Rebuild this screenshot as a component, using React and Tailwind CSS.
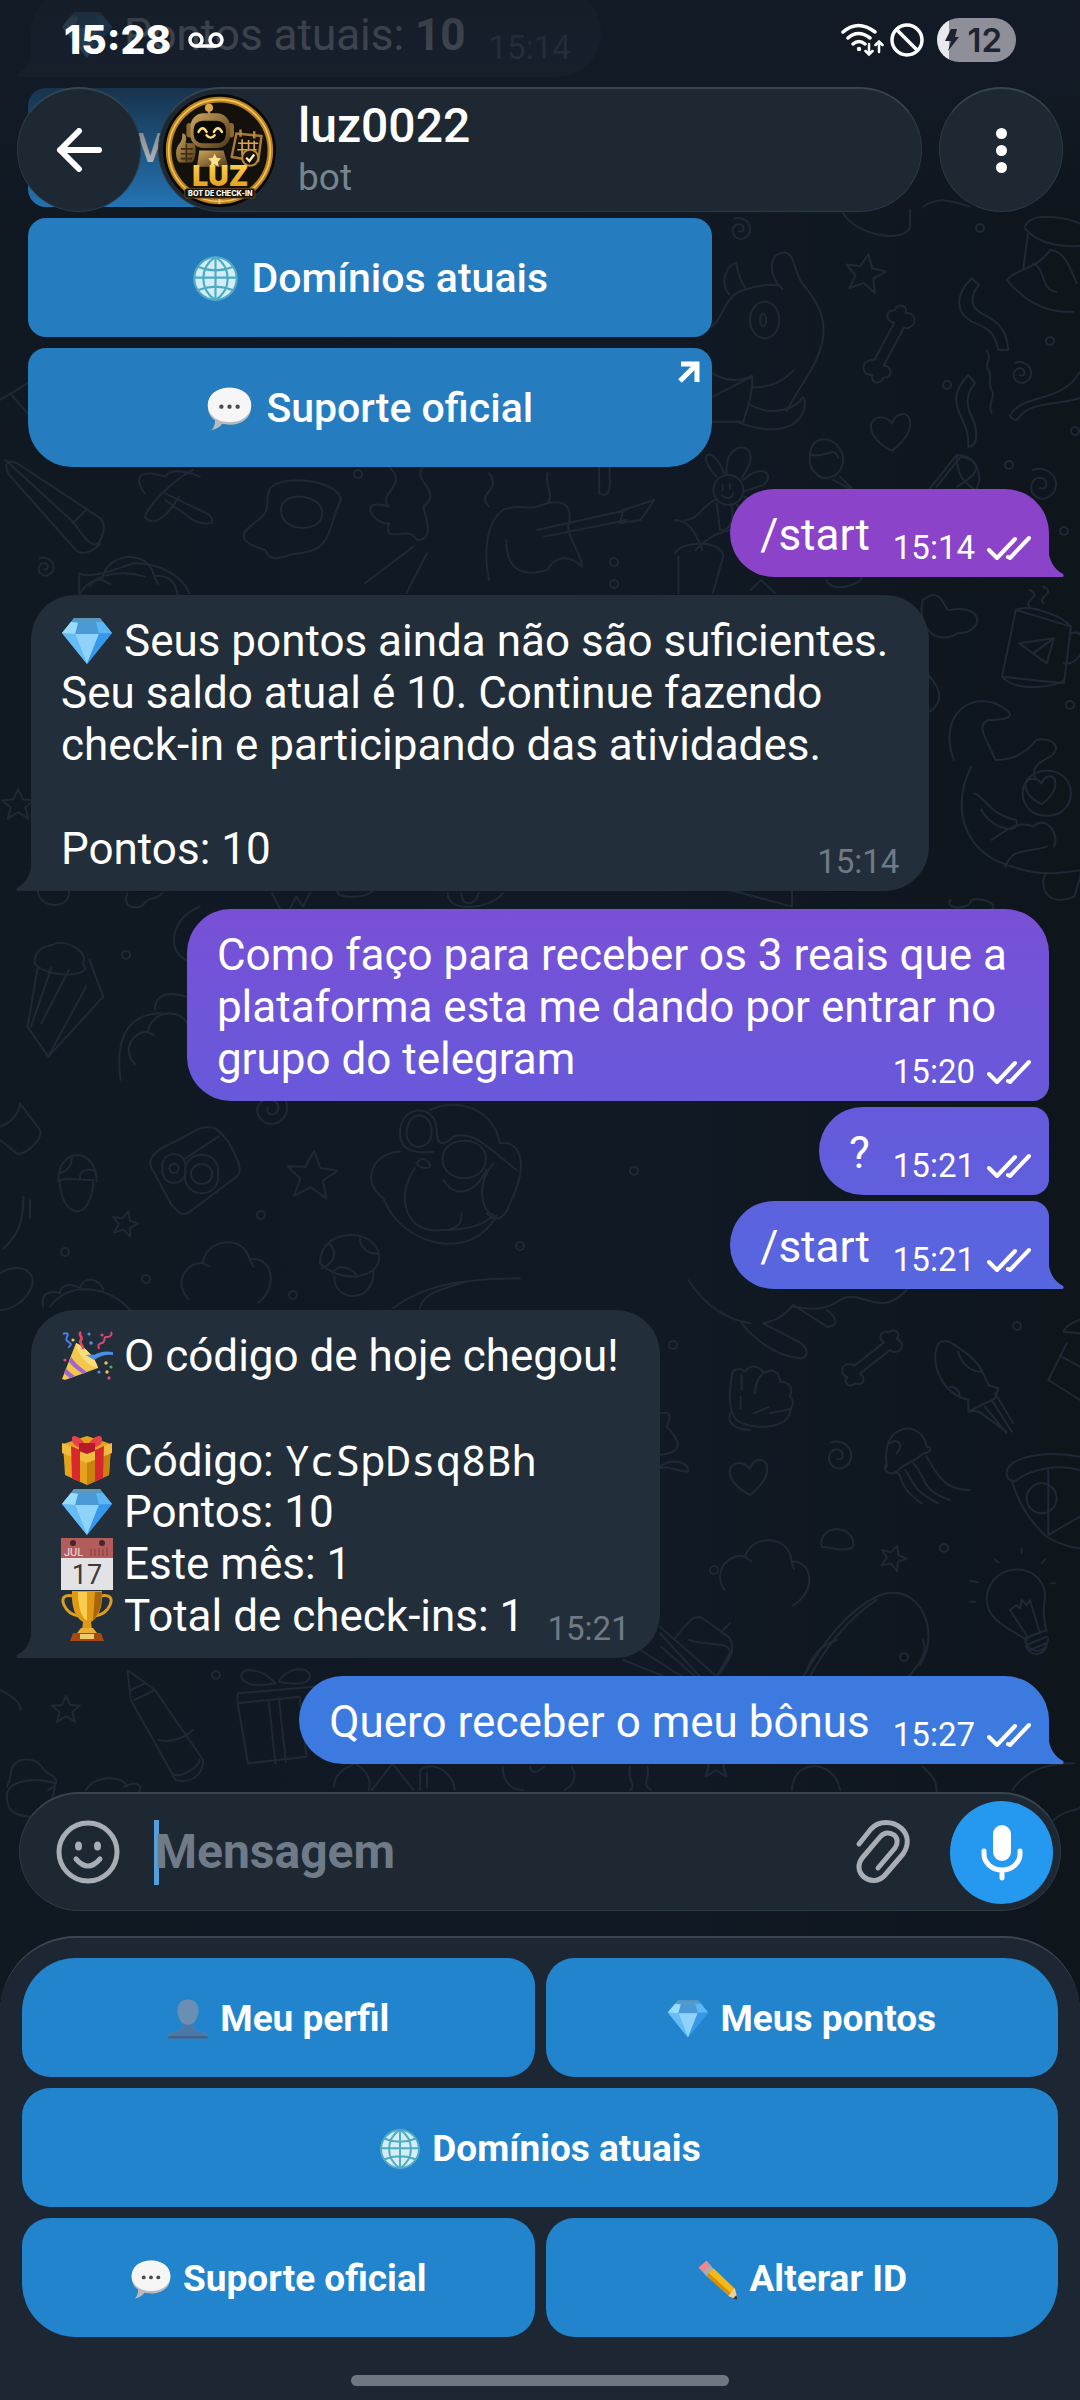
import React, { useState } from 'react';
import clsx from 'clsx';

/* ---------- emoji ---------- */

const Diamond = () => (
  <g>
    <path d="M13 3h26l12 15-25 31L1 18z" fill="#3fa3ee" />
    <path d="M13 3h26l3 4H10z" fill="#5c97bd" />
    <path d="M10 7h32l9 11H1z" fill="#5bb8f2" />
    <path d="M17 7h18l3 12H14z" fill="#4b9ad6" />
    <path d="M14 19h24L26 49z" fill="#8fd3fb" />
    <path d="M1 18l13 1 12 30z" fill="#66bdf6" />
    <path d="M38 19l13-1-25 31z" fill="#3797ea" />
    <path d="M10 7l7 1-3 11L1 18z" fill="#9adcfb" />
  </g>
);

const Globe = () => (
  <g>
    <circle cx="26" cy="26" r="24" fill="#d3eef8" />
    <g fill="none" stroke="#4fabc4" strokeWidth="2.4">
      <circle cx="26" cy="26" r="23.5" />
      <path d="M26 2v48M2 25h48M6 13q20 8 40 0M6 39q20-8 40 0" />
      <path d="M26 2C8 14 8 38 26 50M26 2c18 12 18 36 0 48" />
    </g>
  </g>
);

const Speech = () => (
  <g>
    <path d="M26 3C40 3 50 12 50 24S40 44 26 44l-8-1c-3 4-7 6-12 7 3-3 4-7 4-11C5 36 2 30 2 24 2 12 12 3 26 3z" fill="#b9b9be" />
    <path d="M26 3C40 3 50 11 50 22S40 41 26 41 2 33 2 22 12 3 26 3z" fill="#f6f6f7" />
    <g fill="#4a4a4f">
      <circle cx="17" cy="24" r="2.4" />
      <circle cx="26" cy="24" r="2.4" />
      <circle cx="35" cy="24" r="2.4" />
    </g>
  </g>
);

const Popper = () => (
  <g>
    <path d="M15 13C24 17 34 27 37 38L4 50 1 49z" fill="#f3c84f" />
    <path d="M15 13C24 17 34 27 37 38 27 36 16 25 15 13z" fill="#f9dc7c" />
    <path d="M10 27c4 6 10 11 16 15l-4 2C16 40 11 36 8 32zM5 38c3 4 6 6 9 8l-5 2c-2-1-5-4-6-5z" fill="#a765c9" />
    <path d="M25 25q8-1 8 0 8-5 19-3v3q-10-1-19 5z" fill="#4a8ee6" />
    <path d="M20 2c-4 3 3 5 0 8s3 5 2 9" fill="none" stroke="#e6446b" strokeWidth="2.6" />
    <path d="M2 4c4-2 6 0 4 3s0 4 3 6-2 3-1 5" fill="none" stroke="#4c7fe3" strokeWidth="2" />
    <path d="M50 2c2 4-2 5-5 5s0 5-4 6-4 2-3 6" fill="none" stroke="#d94777" strokeWidth="2" />
    <g>
      <circle cx="28" cy="4" r="1.6" fill="#4c8fe3" />
      <circle cx="41" cy="5" r="1.6" fill="#e0447b" />
      <circle cx="30" cy="13" r="1.8" fill="#4c8fe3" />
      <circle cx="12" cy="10" r="1.6" fill="#efc64f" />
      <circle cx="4" cy="30" r="1.6" fill="#e0447b" />
      <circle cx="45" cy="33" r="1.7" fill="#efc64f" />
      <circle cx="50" cy="37" r="1.6" fill="#58a957" />
      <circle cx="38" cy="42" r="1.6" fill="#4c8fe3" />
      <circle cx="46" cy="42" r="1.7" fill="#efc64f" />
      <circle cx="48" cy="48" r="1.7" fill="#e0447b" />
    </g>
  </g>
);

const Gift = () => (
  <g>
    <path d="M2 10l24-8 24 8-2 31-22 10L4 41z" fill="#e4a21d" />
    <path d="M26 19l24-9-2 31-22 10z" fill="#c8830f" />
    <path d="M1 9l25 9 25-9v10l-25 10L1 19z" fill="#f2bd3e" />
    <path d="M10 12l9 4v32l-8-4zM34 16l9-4-1 32-8 4z" fill="#d8272f" />
    <path d="M26 13C20 2 10-1 11 5c0 5 4 8 10 9zM26 13c5-11 15-14 15-8 1 5-4 8-10 9z" fill="#e8414d" />
    <path d="M18 9h16v8l-8 3-8-3z" fill="#b51c28" />
  </g>
);

const Calendar = () => (
  <g>
    <path d="M0 0h52v52H0z" fill="#e3e3e5" />
    <path d="M0 0h52v20H0z" fill="#b35c5c" />
    <circle cx="12" cy="5" r="3" fill="#42282b" />
    <circle cx="41" cy="5" r="3" fill="#42282b" />
    <path d="M30 11v7M34 11v7M38 10v8M42 11v7M46 10v8" stroke="#8d4548" strokeWidth="1.4" />
    <text x="3" y="18" fontSize="11" fill="#f3e4e4" fontFamily="Roboto, sans-serif">JUL</text>
    <text x="26" y="46" fontSize="27" textAnchor="middle" fill="#3b3b3e" fontFamily="Roboto, sans-serif">17</text>
  </g>
);

const Trophy = () => (
  <g>
    <path d="M13 6C3 4 0 8 3 15s8 10 15 11M39 6c10-2 13 2 10 9s-8 10-15 11" fill="none" stroke="#dc9c22" strokeWidth="3" />
    <path d="M11 1h30c1 17-4 27-11 31l1 8H21l1-8C15 28 10 18 11 1z" fill="#dd9a12" />
    <path d="M17 2h9v29c-6-4-9-14-9-29z" fill="#f8cc50" />
    <path d="M34 2h7c0 14-4 24-9 28z" fill="#a9650b" />
    <path d="M20 38h12l4 5H16z" fill="#eab034" />
    <path d="M12 43h28l3 8H9z" fill="#a64a15" />
    <path d="M19 44h14v5H19z" fill="#eecb6d" />
  </g>
);

const Person = () => (
  <g>
    <path d="M26 2c9 0 13 6 13 14 0 7-3 11-6 15-2 6 0 8 6 10 8 2 12 4 12 9H1c0-5 4-7 12-9 6-2 8-4 6-10-3-4-6-8-6-15C13 8 17 2 26 2z" fill="#6b8fb4" />
    <path d="M19 31c4 3 10 3 14 0-2 6 0 8 6 10 8 2 12 4 12 9H1c0-5 4-7 12-9 6-2 8-4 6-10z" fill="#4d78a6" />
    <path d="M2 47h48l1 3H1z" fill="#3c6290" />
  </g>
);

const Pencil = () => (
  <g>
    <path d="M3 12l10-9 6 7-9 9z" fill="#e98a90" />
    <path d="M9 18l9-9 4 5-9 9z" fill="#a7acb0" />
    <path d="M13 22l9-9 26 25-7 9z" fill="#f5b915" />
    <path d="M13 22l3-3 28 25-3 3z" fill="#d38f0d" />
    <path d="M48 37l4 15-12-5z" fill="#eed0a0" />
    <path d="M50 46l2 6-6-2z" fill="#333" />
  </g>
);

const EMOJI = {
  diamond: ['Diamante', Diamond],
  globe: ['Globo', Globe],
  speech: ['Balão', Speech],
  popper: ['Festa', Popper],
  gift: ['Presente', Gift],
  calendar: ['Calendário', Calendar],
  trophy: ['Troféu', Trophy],
  person: ['Pessoa', Person],
  pencil: ['Lápis', Pencil],
};

function Emoji({ name, className }) {
  const [label, Drawing] = EMOJI[name];
  return (
    <svg viewBox="0 0 52 52" role="img" aria-label={label} className={clsx('shrink-0', className)}>
      <Drawing />
    </svg>
  );
}

/* ---------- wallpaper ---------- */

const STAR = 'M0-20L6-7 20-6 9 3 13 17 0 9-13 17-9 3-20-6-6-7Z';
const HEART = 'M2 18C-10 12-20 2-18-8-14-16-4-16 2-8 5-19 17-20 19-11 21 0 12 10 2 18Z';
const BONE = 'M-24-6H24C20-15 31-22 36-12 46-13 48-1 39 0 45 10 34 17 28 12 24 10 24 8 24 6H-24C-20 15-31 22-36 12-46 13-48 1-39 0-45-10-34-17-28-12-24-10-24-8-24-6Z';
const SPIRAL = 'M0 2C7 5 9-5 2-8-8-10-12 2-6 9 2 17 15 11 16-1 16-13 4-20-7-16';
const CLOUD = 'M-44 30C-62 10-44-12-28-10-24-38 18-42 24-14 50-18 56 16 34 34M-28-10l8 4M24-14l4 8';

// [path, x, y, rotation, scale]
const SMALL = [
  [STAR, 865, 274, 10, 1], [STAR, 893, 1558, 20, 0.65], [STAR, 312, 1176, 5, 1.25], [STAR, 125, 1224, 15, 0.65],
  [STAR, 66, 1710, 0, 0.7], [STAR, 18, 805, 0, 0.8], [STAR, 716, 1763, 0, 0.8],
  [HEART, 890, 432, 0, 1.05], [HEART, 748, 1477, 0, 1], [HEART, 1040, 790, 0, 0.8],
  [BONE, 889, 344, -62, 0.9], [BONE, 872, 1358, -38, 0.8],
  [SPIRAL, 739, 230, 0, 0.7], [SPIRAL, 1020, 374, 0, 0.7], [SPIRAL, 1040, 486, 0, 1], [SPIRAL, 837, 1457, 0, 0.9],
  [SPIRAL, 270, 1108, 90, 1], [SPIRAL, 44, 568, 0, 0.6],
  [CLOUD, 228, 1272, 0, 0.9], [CLOUD, 768, 1570, 10, 0.9], [CLOUD, 170, 1040, 0, 0.8], [CLOUD, 130, 590, 0, 1],
];

const DOTS = [
  [980, 228], [1050, 341], [947, 385], [1009, 465], [1075, 431], [1064, 531], [614, 562], [358, 474], [673, 1345],
  [1017, 1326], [714, 1570], [944, 1548], [904, 1657], [65, 1252], [146, 1279], [293, 1295], [261, 1215], [520, 1246],
  [634, 1171], [126, 955], [1070, 705], [614, 584], [216, 1675],
];

// Larger drawings, each in its own local space
const SCENES = [
  {
    at: 'translate(700 200) scale(0.3333)',
    d: [
      'M35 380C50 370 60 350 75 320 90 290 110 275 138 268M108 188c-30 10-50 60-20 95M108 188c8 40 15 60 30 80M138 268c40-14 70-14 92-12M248 268C200 220 210 165 245 158c40-5 35 50 60 90 50 60 70 100 65 160-10 80-60 130-110 225M150 360a42 52 0 1 0 88 0a42 52 0 1 0-88 0M180 360a8 16 0 1 0 18 0a8 16 0 1 0-18 0',
      'M38 520c40 25 80 25 118 8M160 562c50 0 85-15 122-52M38 590l118-60c5 50-15 90-25 135H38M150 615c50 28 110 22 150-10 10-30 20 0 10 30-30 70-130 60-200 30',
      'M330 770a50 55 0 1 0 92-20c-30-50-95-40-92 20M335 765c40 10 70-30 80 10M400 840l55 30M420 830l35 35',
      'M815 235c-50 50-50 100 0 130 50 20 70 30 80 85h30c-5-70-40-90-80-110-40-20-30-60-8-85zM860 450c20 30-10 40 5 60s-5 40 10 60-15 40 0 70M805 525c-50 50-40 90-20 130 20 40 20 60 20 85 30 0 30-50 10-90-20-40-15-70 10-100z',
      'M975 80c20-50 140-30 200 10M975 85c40 50 120 60 200 50M985 95l-15 110M920 240c40-40 90-30 130-90 40 0 60 50 80 100M920 240c60 70 130 100 200 95M1000 190c40 20 20 80 70 85',
      'M935 640c40-60 150-30 205-125M955 655c30-50 120-40 185-60M930 645c0 10 20 20 25 10',
      'M40 870a45 45 0 1 0 90 0a45 45 0 1 0-90 0M50 830C-20 760 40 730 72 820M80 820c-10-100 100-100 65-20l-20 35M130 840c50-50 100-20 60 15l-60 20M130 890c60 10 50 60 30 70l-50-45M95 915c10 50-10 80-35 75l-10-80M45 900c-40 20-50 60-90 60M68 855v15M90 852v15M65 885c10 12 30 12 35-5',
      'M690 865l80-100c60 0 80 60 60 100M770 765c0 60 20 80 50 100M430 40c40 70 190 90 200 40V30M670 20c40-30 80-20 140 0',
    ],
  },
  {
    at: 'translate(0 1100) scale(0.3333)',
    d: [
      'M175 240c0-100 115-100 115 5M175 245c20-15 60-5 105-5-5 130-95 120-102 0M215 175c0 30-20 40-35 45M240 235c0-25 20-30 48-22',
      'M600 85c40-10 55 0 85 40 40 70 40 90 25 105l-140 105c-20 15-35 5-55-20l-60-110c-10-25 0-40 30-60zM488 205a35 35 0 1 0 68 0a35 35 0 1 0-68 0M508 205a14 14 0 1 0 28 0a14 14 0 1 0-28 0M556 222a50 48 0 1 0 98 0a50 48 0 1 0-98 0M573 222a32 30 0 1 0 64 0a32 30 0 1 0-64 0M550 180l105-70',
      'M960 490c0-110 170-110 178-20 0 70-120 80-178 20zM985 430c30 20 20 60-20 75M1080 415c0 30 30 50 55 45M1003 530c0 80 118 80 118-15M1000 515c20-25 60-10 72 15',
      'M1200 100c0-90 110-90 110-10 0 60 30 40 50 20 60-20 100 30 190 100M1200 100c0 60 60 60 100 55M1220 100c0-70 75-70 75-5 0 60-75 60-75 5M1328 175c0-70 130-70 130 0 0 80-130 80-130 0M1250 190c20-30 40 0 42 10-10 10-40 0-42-10M1290 30c90-40 190 0 210 100 60-10 90 60 30 180-20 60-50 50-70 30M1200 155c-80 0-120 90-50 140 60 150 270 190 340 50M1245 205c-60 80-30 200 80 185 60 0 120-10 150-40M1480 190c-50 60-40 140 0 155M1330 240c30 50 90 50 130-30M1385 340c0 30-10 40-40 50',
      'M70 290c0 70-10 110-60 155M90 300v55M0 520c60-40 120 0 90 50-20 40-60 60-90 60M130 620c-10-40 20-50 50-40 0-30 40-30 60-15 10-40 60-30 70 5M150 620c60-80 180-60 240 10M1180 625c100-80 250-90 380-90M1260 625c10-50 80-60 140-80M0 80c30-10 60-40 60-70l60 80c10 30-50 80-70 70L0 120',
    ],
  },
  {
    at: 'translate(660 1280) scale(0.3333)',
    d: [
      'M85 0c50 80 120 120 185 130M245 130c50 60 110 100 180 105 30-10 10-40-10-50l-105-55c40-10 60-20 90-55l100 65c40 0 30-30 0-50M400 80c60 10 100 10 140-20 60-40 120 60 200-30',
      'M215 290c0-30 30-25 40-15 20-30 50-10 55 5 30-20 50 0 50 25 30 0 40 20 30 45 20 20 0 30 0 50-20 50-120 50-160 20-30-30-20-100-15-130M245 285v45M305 285c-20 20-18 40-20 55M210 400c-10 30 20 50 60 50M280 400l45-18M330 400l60-12M242 350v35',
      'M830 200c20-40 60 0 90 20 40 30 50 60 65 95l30 10-10 30-40 20-40 20v-35c-80-20-110-100-95-160M895 215c10 40 40 60 70 60M870 320c20 0 30 15 30 30M1005 340l55 90M995 360l60 95M975 380l65 80M930 395c20-5 30 0 40 10l70 50',
      'M680 560C660 420 790 420 800 500c20 0 10 20-10 20-20 20-50 30-70 45-20 30-60 10-40-15M705 575c30 10 0 40 80 95M735 570c30 40 20 60 100 100M760 550c40 40 20 80 110 110M800 530c30 50 50 100 130 100M690 490c30-20 40 10 20 30',
      'M1040 580c0-50 120-70 220-50M1040 580c0 20 20 30 30 20 40-30 120-50 190-30M1055 600c20 70 60 130 105 170 30 20 60 30 100 35M1165 565v200l95-55M1100 655a45 45 0 1 0 90 0a45 45 0 1 0-90 0',
      'M1100 1080c-60-40-120-60-120-125 10-120 180-110 175 0-10 50 0 80 5 100M1095 1075l65-25M1100 1095l60-25M1110 1110l50-20M1095 1075c0 40 60 60 70 0M1105 1075l-55-85 20-15 10 10 5-25 15 15 10-15 30 100M1085 805v15M1005 838l10 10M1155 838l-10 12M932 903l22 4M1175 910h10M930 965h15',
      'M430 1190c60-100 130-200 230-245 130-40 180 120 120 210M450 1190c40-80 120-180 200-230M0 1040l165 145M45 1075c40-50 60-80 90-55l70 50c30 40 0 70-30 115M0 1060l120 130M185 1055l25-25M485 800c-10-70 100-70 95 0-20 20-80 0-95 0',
      'M1260 160l-50-5c10-20 30-30 50-35M1220 190l-55 110 95 60M1205 230l55 30M0 400c40-10 30 20 20 40 60 60 30 80-20 85M0 560c40-30 90-10 85 15-40 0-50-20-85-10',
    ],
  },
  {
    at: 'translate(0 200) scale(0.6887 0.3333)',
    d: [
      'M8 780l100 190c10 30 30 100 40 40 10-60-10-60-20-80L25 790c-20-20-20 20-5 50l90 210c10 20 30 0 35-20M105 970l20-40',
      'M210 880c-20-60 0-70 30-50 10-30 40-10 50 0M210 950c10-50 50-120 70-140M240 880l60 60c20 30 0 40-20 20l-40-60M210 950c10 30 30 10 50-60',
      'M390 880c0-60 100-50 105 20-20 80-10 150-60 160-20 0-40 40-50-10-50-30-30-60-10-90 20-30 10-60 15-80M408 930c0-60 60-50 60 10 0 60-60 60-60-10',
      'M565 800c30 60-20 80 0 120-50-30-20 60 0 50-10 70 30 0 40 50 30 0 10-80 10-100 30-50-20-80 0-120M600 1040l-70 110M620 1060l-30 120',
      'M710 1140c-10-100 0-180 20-210 20-20 40 0 50-10 50-40 50 20 45 60 0 40 20 80 20 120-20-40-40-30-50 10-50 30-60-30-60-90M780 990l130-60M790 1010l120-50M905 930l45-30-20 60-30 10zM710 820c20 50-20 60 0 100M795 820c-5 30 10 60 0 90M870 800v80c20 20 15-40 15-80',
      'M115 1180v-60c20 20 60-20 80-30 40 0 70 40 80 90M130 1160c10-40 50-50 80-30M0 600l40-50M15 580l25 60M980 1060c10-40 70-40 70 10l-15 110M985 1070v110M980 960c20 0 30 40 40 90M1010 1050c20-40 30-50 50-60M1360 860l35-90c40 20 20 60-5 90',
    ],
  },
  {
    at: 'translate(0 580) scale(0.6887 0.3333)',
    d: [
      'M1385 540c-20-110 10-200 60-170 30 30 30 50-10 50-20 20 0 60 10 120 20 0 40-10 60-60 20-10 40 20 20 50-20 20-30 40-20 70M1410 560c-30 130-10 260 60 300 40 30 70 20 100 10M1485 640c0-90 70-90 70 0 0 90-70 90-70 0M1415 640c20 20 20 60 60 80 10 40-30 40-50-30M1440 780c20-30 40-60 60-40 20-40 40 30 30 60M1460 860c10-60 30-40 60-60M1570 880l-10 70c-50 40-50-60-40-70',
      'M1475 90l80 50-10 170-90-20zM1475 90c20-20 70 20 80 50M1455 290c20 50 80 30 90 10M1480 190l50-15-10 75-20-30zM1500 220l30-45M1555 160c30-20 20 100-10 90M1495 30c20 20-10 30 0 50M1515 20c20 20-10 30 0 50',
      'M55 1160l-15 180 30 90 80-180-20-110M50 1150c0-60 30-50 30-60 20-10 50 30 40 60 20 40-50 50-70 0M60 1330l40-160M70 1430l55-210M45 1340l30-180',
      'M175 1500c-10-150 20-200 60-200M225 1290c0-60 30-50 45-40M290 980c-40 30-50 130-20 160M1340 60c30-50 30 40 40 30 50-20 50 70 10 70-30 40-60-20-50-100M1345 280c30 60 20 100 0 120M1200 0c10 50 60 0 50-10M1090 30l15-30 20 40M55 930c0 60 50 60 45 0M185 940c-10 50 20 50 25 30s20-10 25-30M490 935c0 20 40 20 50 0M650 940c0 60 60 50 80 0M670 940c0 40 20 40 25 0M395 940l15 60M420 990l10-40 10 30 10-40M1060 930l90 50M1150 930v50M1380 960c-10 30 30 30 30 0 20-10 50 20 20 40',
    ],
  },
  {
    at: 'translate(0 1640) scale(0.6887 0.3333)',
    d: [
      'M185 90l40 60 70 210c0 50-20 70-40 60l-65-240zM190 150l20-20M195 180l30-30M230 300c20 10 40-10 50-30M250 400c10 20 40-20 40-40',
      'M345 190l90-20 10 180-85 20zM345 190v-30l110-20v30M390 180l10 190M405 175l10 190M400 130c-50 20-60-30-40-40 20 0 30 20 40 40M405 125c10-40 40-50 45-20 0 30-20 30-45 20',
      'M10 470c0-50 40-60 70-40 0 40-10 80-30 100-30 0-40-20-40-60M10 440c10-40 0-60 20-80 30-10 30 30 40 40 20 20 10 40 0 50M0 150c20 20 30 40 30 60M125 450c10-40 50-50 60-10M180 440c20-20 30 0 20 20',
      'M485 440c0-40 20-60 30-70 20 20 25 60 20 80M540 450l30-80 30 80M610 450v-60c20-30 50 10 50 60M620 400v40M730 380c0 40 10 70 30 70M770 380c0 20 10 20 20 0M830 380c10 30 0 60-10 70M915 380c-5 40 10 60 0 70M940 380c5 40-10 50 5 70M1150 450c0-90 60-100 70 0M1340 380c20 40 20 50 20 80M1470 450c20-60 50-80 90-80M1530 540c20-40 40-20 40-50M905 60l60 50M930 30l60 80M960 20l50 90M1000 0c30 20 60 0 60 40l-20 70M1170 100c10-60 20-80 45-100M1340 0c10 40-10 80-20 110M1490 20c10 40 30 20 30-10',
    ],
  },
];

function Wallpaper() {
  return (
    <svg
      aria-hidden="true"
      viewBox="0 0 1080 2400"
      preserveAspectRatio="xMidYMid slice"
      className="absolute inset-0 h-full w-full"
      fill="none"
      stroke="#1f2935"
      strokeWidth="2"
      strokeLinecap="round"
      strokeLinejoin="round"
    >
      {SCENES.map((scene) => (
        <g key={scene.at} transform={scene.at}>
          {scene.d.map((d) => (
            <path key={d} d={d} vectorEffect="non-scaling-stroke" />
          ))}
        </g>
      ))}
      {SMALL.map(([d, x, y, r, s]) => (
        <path key={`${x}-${y}`} d={d} transform={`translate(${x} ${y}) rotate(${r}) scale(${s})`} vectorEffect="non-scaling-stroke" />
      ))}
      {DOTS.map(([x, y]) => (
        <circle key={`${x}-${y}`} cx={x} cy={y} r="4" />
      ))}
    </svg>
  );
}

/* ---------- messages ---------- */

const Checks = () => (
  <svg viewBox="0 0 44 26" className="h-[26px] w-[44px]" fill="none" stroke="#fff" strokeWidth="4" strokeLinecap="round" strokeLinejoin="round" role="img" aria-label="Lida">
    <path d="M2 15l8 8L28 4" />
    <path d="M21 22l2 1L42 3" />
  </svg>
);

function Meta({ time, out }) {
  return (
    <span className={clsx('mb-[-7px] ml-auto flex shrink-0 items-center gap-[12px] self-end pl-[23px] text-[33px] leading-[40px]', out ? 'text-white' : 'text-[#6f7a86]')}>
      {time}
      {out && <Checks />}
    </span>
  );
}

function Line({ line }) {
  return (
    <span className="flex h-[52px] items-center gap-[11px] whitespace-pre">
      {line.emoji && <Emoji name={line.emoji} className="size-[52px]" />}
      <span>
        {line.text}
        {line.code && <code className="font-['Noto_Sans_Mono','DejaVu_Sans_Mono',monospace] text-[42px] leading-[52px]">{line.code}</code>}
        {line.bold && <b className="font-bold">{line.bold}</b>}
      </span>
    </span>
  );
}

// The time shares the row of the last line
function Bubble({ lines, time, out, className, children }) {
  const last = lines.length - 1;
  return (
    <article className={clsx('relative w-fit pt-[20px] pb-[16px] pl-[30px]', className)}>
      {children}
      <div className="text-[44px] leading-[52px] text-white">
        {lines.map((line, i) => (
          <div key={i} className={clsx('flex', i < last && (out ? 'pr-[24px]' : 'pr-[11px]'))}>
            <Line line={line} />
            {i === last && <Meta time={time} out={out} />}
          </div>
        ))}
      </div>
    </article>
  );
}

function Incoming({ className, ...props }) {
  return (
    <Bubble {...props} className={clsx('ml-[31px] rounded-[44px] rounded-bl-none bg-[#222e3a] pr-[30px]', className)}>
      <svg viewBox="0 0 16 30" className="absolute bottom-0 left-[-15px] h-[30px] w-[16px]" fill="#222e3a" aria-hidden="true">
        <path d="M16 0C15 14 10 22 1 27c-1 1-1 3 1 3h14z" />
      </svg>
    </Bubble>
  );
}

function Outgoing({ tail, className, ...props }) {
  return (
    <Bubble {...props} out className={clsx('mr-[31px] self-end pr-[18px]', className)}>
      {tail && (
        <svg viewBox="0 0 16 30" className="absolute right-[-15px] bottom-0 h-[30px] w-[16px]" fill={tail} aria-hidden="true">
          <path d="M0 0c1 14 6 22 15 27 1 1 1 3-1 3H0z" />
        </svg>
      )}
    </Bubble>
  );
}

function InlineButton({ emoji, children, link, className }) {
  return (
    <button type="button" className={clsx('relative flex h-[119px] w-full items-center gap-[13px] bg-[#257cbf] pt-[2px] text-[41px] font-medium text-white', className)}>
      {emoji && <Emoji name={emoji} className="size-[47px]" />}
      {children}
      {link && (
        <svg viewBox="0 0 22 22" className="absolute top-[13px] right-[12px] size-[22px]" fill="none" stroke="#fff" strokeWidth="5" aria-hidden="true">
          <path d="M3 3h16v18M18 4L2 20" />
        </svg>
      )}
    </button>
  );
}

/* ---------- header ---------- */

function Avatar() {
  return (
    <svg viewBox="0 0 140 140" className="size-[113px] shrink-0" role="img" aria-label="luz0022">
      <defs>
        <linearGradient id="gold" x1="0" y1="0" x2="0" y2="1">
          <stop offset="0" stopColor="#ffd95c" />
          <stop offset="1" stopColor="#e09312" />
        </linearGradient>
        <linearGradient id="bronze" x1="0" y1="0" x2="1" y2="1">
          <stop offset="0" stopColor="#cfa65e" />
          <stop offset="1" stopColor="#4f3818" />
        </linearGradient>
      </defs>
      <circle cx="70" cy="70" r="70" fill="#0a0806" />
      <circle cx="70" cy="70" r="63" fill="#14110d" stroke="#b9821f" strokeWidth="7" />
      <circle cx="70" cy="70" r="63" fill="none" stroke="#f0c65c" strokeWidth="2" />
      <path d="M57 14v12" stroke="#b98a3e" strokeWidth="3" />
      <circle cx="57" cy="17" r="5" fill="#dca84a" />
      <rect x="29" y="36" width="8" height="18" rx="4" fill="#8a6630" />
      <rect x="80" y="36" width="8" height="18" rx="4" fill="#8a6630" />
      <rect x="34" y="24" width="49" height="43" rx="16" fill="url(#bronze)" />
      <rect x="38" y="33" width="40" height="28" rx="11" fill="#0b0906" />
      <path d="M44 47q5-9 10 0M63 47q5-9 10 0M54 51q5 6 10 0" fill="none" stroke="#ffdf80" strokeWidth="3" strokeLinecap="round" />
      <path d="M45 70h30l6 20H42z" fill="url(#bronze)" />
      <path d="M64 74l2.500 5 5.500 1-4 4 1 6-5-3-5 3 1-6-4-4 5.500-1z" fill="#ffe08a" />
      <path d="M20 62q4-4 4-13c6 0 5 8 4 12h10c4 3 3 20-2 24H20c-5-5-5-18 0-23z" fill="url(#bronze)" />
      <path d="M22 68h15M22 74h15M22 80h14M29 62v22" stroke="#3d2b12" strokeWidth="2" />
      <path d="M91 49l31 3-4 31-33-5z" fill="#17120c" stroke="#a87a35" strokeWidth="3" strokeLinejoin="round" />
      <path d="M96 44v9M113 46v9" stroke="#b98a3e" strokeWidth="3" />
      <path d="M93 61h25M92 69h24M98 56v20M106 57v20M113 58v18" stroke="#d9a950" strokeWidth="2" />
      <circle cx="108" cy="79" r="10" fill="#17120c" stroke="#b98a3e" strokeWidth="2.500" />
      <path d="M103 79l4 4 6-8" fill="none" stroke="#fff0c0" strokeWidth="3" />
      <text x="71" y="114" textAnchor="middle" fontSize="35" fontWeight="900" fill="url(#gold)" fontFamily="Inter, sans-serif">LUZ</text>
      <rect x="27" y="117" width="87" height="12" rx="3" fill="#1b140c" stroke="#6d4f22" />
      <text x="71" y="126" textAnchor="middle" fontSize="9" fontWeight="800" fill="#fff" fontFamily="Inter, sans-serif">BOT DE CHECK-IN</text>
      <path d="M70 130v6" stroke="#f5cf68" strokeWidth="2" />
    </svg>
  );
}

function StatusBar() {
  return (
    <div className="flex h-[87px] items-start justify-between px-[64px] pt-[18px]">
      <div className="flex h-[44px] items-center gap-[17px]">
        <span className="font-['Inter',sans-serif] text-[39px] leading-[44px] font-extrabold text-white">15:28</span>
        <svg viewBox="0 0 36 16" className="h-[16px] w-[36px]" fill="none" stroke="#fff" strokeWidth="3.500" role="img" aria-label="Correio de voz">
          <circle cx="8" cy="8" r="6" />
          <circle cx="28" cy="8" r="6" />
          <path d="M8 14h20" />
        </svg>
      </div>
      <div className="flex h-[44px] items-center">
        <svg viewBox="0 0 44 34" className="h-[34px] w-[44px]" fill="none" stroke="#fff" strokeLinecap="round" role="img" aria-label="Wi-Fi">
          <path d="M3 9q15-13 32 0M8 15q10-9 22 0M13 21q6-5 12 0" strokeWidth="3.500" />
          <circle cx="19" cy="26" r="2.200" fill="#fff" stroke="none" />
          <path d="M29 21v10M25.500 28l3.500 3.500 3.500-3.500M39 29V19M35.500 22l3.500-3.500 3.500 3.500" strokeWidth="2.500" />
        </svg>
        <svg viewBox="0 0 34 34" className="ml-[6px] size-[34px]" fill="none" stroke="#fff" strokeWidth="3.500" role="img" aria-label="Não perturbe">
          <circle cx="17" cy="17" r="15" />
          <path d="M7 7l20 20" />
        </svg>
        <div className="ml-[13px] flex h-[44px] w-[79px] items-center justify-end gap-[8px] rounded-full bg-linear-to-r from-[#e9e9ec] from-15% to-[#8e8f99] to-15% pr-[14px]">
          <svg viewBox="0 0 14 22" className="h-[22px] w-[14px]" fill="#1d2330" aria-hidden="true">
            <path d="M6 0h6l-2 8h4L3 22l3-10H0z" />
          </svg>
          <span className="font-['Inter',sans-serif] text-[33px] leading-[44px] font-semibold text-[#1d2330]">12</span>
        </div>
      </div>
    </div>
  );
}

const glass = 'border border-t-2 border-[#2c3843] border-t-[#384551] bg-[#1d2833]';

function Header() {
  return (
    <header className="absolute inset-x-0 top-0 z-10 bg-linear-to-b from-[#131b27]/85 via-[#131b27]/75 via-40% to-[#131b27]/0 pb-[10px]">
      <StatusBar />
      <div className="flex items-center gap-[17px] px-[17px]">
        <button type="button" aria-label="Voltar" className={clsx('flex h-[125px] w-[124px] shrink-0 items-center justify-center rounded-full', glass)}>
          <svg viewBox="0 0 46 44" className="h-[44px] w-[46px]" fill="none" stroke="#fff" strokeWidth="6" strokeLinecap="round" strokeLinejoin="round">
            <path d="M43 22H4M23 3L4 22l19 19" />
          </svg>
        </button>
        <div className={clsx('flex h-[125px] flex-1 items-center gap-[22px] rounded-full pl-[4px]', glass)}>
          <Avatar />
          <div>
            <h1 className="text-[48px] leading-[56px] font-medium text-white">luz0022</h1>
            <p className="text-[37px] leading-[48px] text-[#77858f]">bot</p>
          </div>
        </div>
        <button type="button" aria-label="Mais opções" className={clsx('flex h-[125px] w-[124px] shrink-0 flex-col items-center justify-center gap-[6px] rounded-full', glass)}>
          <span className="size-[11px] rounded-full bg-white" />
          <span className="size-[11px] rounded-full bg-white" />
          <span className="size-[11px] rounded-full bg-white" />
        </button>
      </div>
    </header>
  );
}

/* ---------- composer and reply keyboard ---------- */

function Composer() {
  const [message, setMessage] = useState('');

  return (
    <form className={clsx('relative mx-[19px] mt-[28px] flex h-[119px] items-center rounded-full pr-[7px] pl-[36px]', glass)} onSubmit={(e) => e.preventDefault()}>
      <button type="button" aria-label="Emojis">
        <svg viewBox="0 0 64 64" className="size-[64px]" fill="none" stroke="#a9adb5" strokeWidth="5" strokeLinecap="round">
          <circle cx="32" cy="32" r="29" />
          <path d="M20 39q12 14 24 0" />
          <ellipse cx="22.500" cy="26" rx="3.500" ry="4.500" fill="#a9adb5" stroke="none" />
          <ellipse cx="41.500" cy="26" rx="3.500" ry="4.500" fill="#a9adb5" stroke="none" />
        </svg>
      </button>
      <span className="ml-[34px] h-[65px] w-[5px] shrink-0 bg-[#539fdb]" aria-hidden="true" />
      <input
        type="text"
        aria-label="Mensagem"
        placeholder="Mensagem"
        value={message}
        onChange={(e) => setMessage(e.target.value)}
        className="-ml-[4px] h-[65px] min-w-0 flex-1 bg-transparent text-[48px] font-bold text-white outline-none placeholder:text-[#6f7b88]"
      />
      <button type="button" aria-label="Anexar" className="mr-[39px]">
        <svg viewBox="0 0 56 64" className="h-[64px] w-[56px]" fill="none" stroke="#a9adb5" strokeWidth="5" strokeLinecap="round" strokeLinejoin="round">
          <path d="M4 24L16 9C24 0 38 1 46 8c8 7 8 17 2 26L30 55c-6 7-15 7-21 2-6-5-7-13-1-20l17-20c4-5 10-5 14-2s4 9 1 13L23 48" />
        </svg>
      </button>
      <button type="button" aria-label="Gravar áudio" className="flex size-[103px] shrink-0 items-center justify-center rounded-full bg-[#2499ef]">
        <svg viewBox="0 0 44 58" className="h-[58px] w-[44px]" fill="none" stroke="#fff" strokeWidth="5" strokeLinecap="round">
          <rect x="13" y="2" width="18" height="36" rx="9" fill="#fff" stroke="none" />
          <path d="M4 28v3a18 16 0 0 0 36 0v-3M22 47v8" />
        </svg>
      </button>
    </form>
  );
}

const KEYS = [
  { emoji: 'person', label: 'Meu perfil', className: 'rounded-[28px] rounded-tl-[54px]' },
  { emoji: 'diamond', label: 'Meus pontos', className: 'rounded-[28px] rounded-tr-[54px]' },
  { emoji: 'globe', label: 'Domínios atuais', className: 'col-span-2 rounded-[28px]' },
  { emoji: 'speech', label: 'Suporte oficial', className: 'rounded-[28px] rounded-bl-[54px]' },
  { emoji: 'pencil', label: 'Alterar ID', className: 'rounded-[28px] rounded-br-[54px]' },
];

function ReplyKeyboard() {
  return (
    <section aria-label="Teclado do bot" className="relative mt-[25px] rounded-t-[76px] border-t-2 border-[#3a4550] bg-[#1d2733] px-[22px] pt-[20px]">
      <div className="grid grid-cols-2 gap-[11px]">
        {KEYS.map((key) => (
          <button
            key={key.label}
            type="button"
            className={clsx('flex h-[119px] items-center justify-center gap-[11px] bg-[#2184cd] pt-[2px] text-[37px] font-bold text-white', key.className)}
          >
            <Emoji name={key.emoji} className="size-[42px]" />
            {key.label}
          </button>
        ))}
      </div>
      <div className="mx-auto mt-[38px] mb-[14px] h-[11px] w-[378px] rounded-full bg-[#6f7780]" />
    </section>
  );
}

export default function App() {
  return (
    <div className="relative flex h-screen flex-col overflow-hidden bg-[#101821] bg-linear-to-r from-[#101822] via-[#111925] via-60% to-[#0e151b] font-['Roboto',sans-serif]">
      <Wallpaper />
      <Header />

      <main className="relative flex min-h-0 flex-1 flex-col justify-end">
        <Incoming lines={[{ emoji: 'diamond', text: 'Pontos atuais: ', bold: '10' }]} time="15:14" className="opacity-90" />

        <div className="mt-[11px] ml-[28px] flex w-[63.3%] flex-col gap-[11px]">
          <InlineButton className="justify-start rounded-[18px] pl-[109px]">V</InlineButton>
          <InlineButton emoji="globe" className="justify-center rounded-[18px]">Domínios atuais</InlineButton>
          <InlineButton emoji="speech" link className="justify-center rounded-[18px] rounded-b-[44px]">Suporte oficial</InlineButton>
        </div>

        <Outgoing lines={[{ text: '/start' }]} time="15:14" tail="#8b44c9" className="mt-[22px] rounded-[44px] rounded-br-none bg-[#8b44c9]" />

        <Incoming
          lines={[
            { emoji: 'diamond', text: 'Seus pontos ainda não são suficientes.' },
            { text: 'Seu saldo atual é 10. Continue fazendo' },
            { text: 'check-in e participando das atividades.' },
            { text: '' },
            { text: 'Pontos: 10' },
          ]}
          time="15:14"
          className="mt-[18px]"
        />

        <Outgoing
          lines={[
            { text: 'Como faço para receber os 3 reais que a' },
            { text: 'plataforma esta me dando por entrar no' },
            { text: 'grupo do telegram' },
          ]}
          time="15:20"
          className="mt-[18px] rounded-[44px] rounded-br-[16px] bg-linear-to-b from-[#7850d6] to-[#6759da]"
        />
        <Outgoing lines={[{ text: '?' }]} time="15:21" className="mt-[6px] rounded-[44px] rounded-r-[16px] bg-linear-to-b from-[#665adb] to-[#605fdd]" />
        <Outgoing
          lines={[{ text: '/start' }]}
          time="15:21"
          tail="#5667df"
          className="mt-[6px] rounded-[44px] rounded-tr-[16px] rounded-br-none bg-linear-to-b from-[#5d61dd] to-[#5667df]"
        />

        <Incoming
          lines={[
            { emoji: 'popper', text: 'O código de hoje chegou!' },
            { text: '' },
            { emoji: 'gift', text: 'Código: ', code: 'YcSpDsq8Bh' },
            { emoji: 'diamond', text: 'Pontos: 10' },
            { emoji: 'calendar', text: 'Este mês: 1' },
            { emoji: 'trophy', text: 'Total de check-ins: 1' },
          ]}
          time="15:21"
          className="mt-[21px]"
        />

        <Outgoing lines={[{ text: 'Quero receber o meu bônus' }]} time="15:27" tail="#3d7ae0" className="mt-[18px] rounded-[44px] rounded-br-none bg-[#3d7ae0]" />
      </main>

      <Composer />
      <ReplyKeyboard />
    </div>
  );
}
